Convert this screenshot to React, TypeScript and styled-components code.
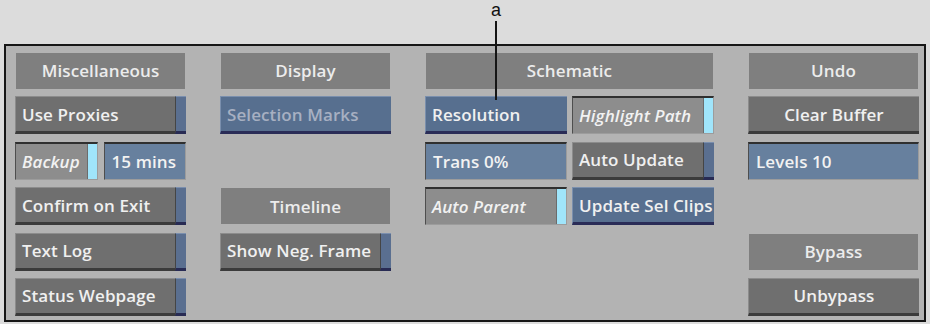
import React from "react";
import styled, { createGlobalStyle, css } from "styled-components";

const GlobalStyle = createGlobalStyle`
  html, body { margin: 0; padding: 0; background: #dcdcdc; }
  body { font-family: "Open Sans", "Noto Sans", sans-serif; }
`;

const Page = styled.div`
  position: relative;
  width: 930px;
  height: 324px;
  box-sizing: border-box;
  padding: 44px 0 0 4px;
  background: #dcdcdc;
`;

const Callout = styled.div`
  position: absolute;
  left: 489px;
  top: 0;
  width: 14px;
  display: flex;
  flex-direction: column;
  align-items: center;
  z-index: 2;
  pointer-events: none;
`;

const CalloutLabel = styled.span`
  font-family: "Liberation Sans", Arial, sans-serif;
  font-size: 18px;
  line-height: 20px;
  color: #111;
`;

const Leader = styled.div`
  width: 2px;
  height: 79px;
  margin-top: 1px;
  background: #151515;
`;

const Frame = styled.div`
  width: 922px;
  height: 278px;
  box-sizing: border-box;
  border: 2px solid #161616;
  background: #b3b3b3;
  padding: 6px 0 0 9px;
  display: grid;
  grid-template-columns: 171px 171px 289px 171px;
  grid-template-rows: 37px repeat(5, 38px);
  column-gap: 34px;
  row-gap: 7.4px;
`;

type Place = { $col: number; $row: number };

const place = css<Place>`
  grid-column: ${(p) => p.$col};
  grid-row: ${(p) => p.$row};
`;

const textBase = css`
  font-family: "Open Sans", "Noto Sans", sans-serif;
  font-weight: 600;
  font-size: 17px;
  letter-spacing: 0.1px;
  white-space: nowrap;
`;

const Header = styled.div<Place>`
  ${place};
  align-self: center;
  height: 36px;
  margin: 0 1px;
  background: #7f7f7f;
  color: #ececec;
  display: flex;
  align-items: center;
  justify-content: center;
  ${textBase};
`;

const Pair = styled.div<Place>`
  ${place};
  display: grid;
  grid-template-columns: 1fr 1fr;
  gap: ${(p) => (p.$col === 1 ? 6 : 5)}px;
`;

const Raised = styled.div<Partial<Place>>`
  ${(p) => (p.$col ? place : "")};
  display: flex;
  height: 38px;
  box-sizing: border-box;
  min-width: 0;
`;

type Tone = "gray" | "blue";

const faceColors = {
  gray: { bg: "#6f6f6f", light: "#8c8c8c", dark: "#3b3b3b" },
  blue: { bg: "#576f8f", light: "#7a8fad", dark: "#2a2c57" },
};

const Face = styled.div<{ $tone: Tone; $center?: boolean; $disabled?: boolean }>`
  flex: 1;
  min-width: 0;
  display: flex;
  align-items: center;
  justify-content: ${(p) => (p.$center ? "center" : "flex-start")};
  padding: 0 ${(p) => (p.$center ? 0 : 6)}px;
  background: ${(p) => faceColors[p.$tone].bg};
  border-top: 1px solid ${(p) => faceColors[p.$tone].light};
  border-left: 1px solid ${(p) => faceColors[p.$tone].light};
  border-bottom: 3px solid ${(p) => faceColors[p.$tone].dark};
  color: ${(p) => (p.$disabled ? "#a7b0c2" : "#f0f0f0")};
  overflow: hidden;
  ${textBase};
`;

const Tab = styled.div`
  width: 10px;
  flex: none;
  background: #5a6f90;
  border-top: 1px solid #7b8fae;
  border-left: 1px solid #454545;
  border-bottom: 3px solid #282b54;
`;

const fieldColors = {
  gray: "#8d8d8d",
  blue: "#67809e",
};

const Field = styled.div<Partial<Place> & { $tone: Tone }>`
  ${(p) => (p.$col ? place : "")};
  display: flex;
  height: 38px;
  box-sizing: border-box;
  min-width: 0;
  background: ${(p) => fieldColors[p.$tone]};
  border-top: 2px solid #2f2f2f;
  border-left: 1px solid #4e4e4e;
  border-right: 1px solid #9c9c9c;
  border-bottom: 1px solid #9c9c9c;
`;

const FieldText = styled.div<{ $italic?: boolean }>`
  flex: 1;
  min-width: 0;
  display: flex;
  align-items: center;
  padding: 0 ${(p) => (p.$italic ? 6 : 7)}px;
  color: #f2f2f2;
  font-style: ${(p) => (p.$italic ? "italic" : "normal")};
  overflow: hidden;
  ${textBase};
`;

const Lamp = styled.div`
  width: 9px;
  flex: none;
  background: #a0e5fb;
  border-left: 1px solid #6c6c6c;
`;

type BtnProps = Partial<Place> & {
  label: string;
  tone?: Tone;
  tab?: boolean;
  center?: boolean;
  disabled?: boolean;
};

const Button = ({ label, tone = "gray", tab, center, disabled, $col, $row }: BtnProps) => (
  <Raised $col={$col} $row={$row}>
    <Face $tone={tone} $center={center} $disabled={disabled}>
      {label}
    </Face>
    {tab && <Tab />}
  </Raised>
);

type ToggleProps = Partial<Place> & { label: string };

const Toggle = ({ label, $col, $row }: ToggleProps) => (
  <Field $tone="gray" $col={$col} $row={$row}>
    <FieldText $italic>{label}</FieldText>
    <Lamp />
  </Field>
);

const ValueField = ({ label, $col, $row }: ToggleProps) => (
  <Field $tone="blue" $col={$col} $row={$row}>
    <FieldText>{label}</FieldText>
  </Field>
);

export default function App() {
  return (
    <>
      <GlobalStyle />
      <Page>
        <Callout>
          <CalloutLabel>a</CalloutLabel>
          <Leader />
        </Callout>
        <Frame>
          {/* Miscellaneous */}
          <Header $col={1} $row={1}>Miscellaneous</Header>
          <Button $col={1} $row={2} label="Use Proxies" tab />
          <Pair $col={1} $row={3}>
            <Toggle label="Backup" />
            <ValueField label="15 mins" />
          </Pair>
          <Button $col={1} $row={4} label="Confirm on Exit" tab />
          <Button $col={1} $row={5} label="Text Log" tab />
          <Button $col={1} $row={6} label="Status Webpage" tab />

          {/* Display / Timeline */}
          <Header $col={2} $row={1}>Display</Header>
          <Button $col={2} $row={2} label="Selection Marks" tone="blue" disabled />
          <Header $col={2} $row={4}>Timeline</Header>
          <Button $col={2} $row={5} label="Show Neg. Frame" tab />

          {/* Schematic */}
          <Header $col={3} $row={1}>Schematic</Header>
          <Pair $col={3} $row={2}>
            <Button label="Resolution" tone="blue" />
            <Toggle label="Highlight Path" />
          </Pair>
          <Pair $col={3} $row={3}>
            <ValueField label="Trans 0%" />
            <Button label="Auto Update" tab />
          </Pair>
          <Pair $col={3} $row={4}>
            <Toggle label="Auto Parent" />
            <Button label="Update Sel Clips" tone="blue" />
          </Pair>

          {/* Undo / Bypass */}
          <Header $col={4} $row={1}>Undo</Header>
          <Button $col={4} $row={2} label="Clear Buffer" center />
          <ValueField $col={4} $row={3} label="Levels 10" />
          <Header $col={4} $row={5}>Bypass</Header>
          <Button $col={4} $row={6} label="Unbypass" center />
        </Frame>
      </Page>
    </>
  );
}
